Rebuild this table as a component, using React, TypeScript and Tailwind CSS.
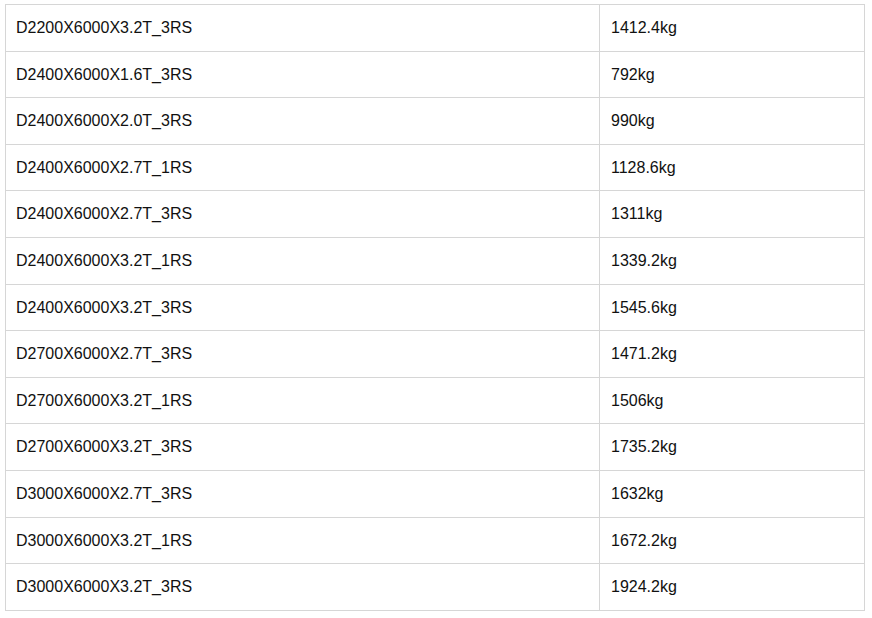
const rows: [string, string][] = [
  ["D2200X6000X3.2T_3RS", "1412.4kg"],
  ["D2400X6000X1.6T_3RS", "792kg"],
  ["D2400X6000X2.0T_3RS", "990kg"],
  ["D2400X6000X2.7T_1RS", "1128.6kg"],
  ["D2400X6000X2.7T_3RS", "1311kg"],
  ["D2400X6000X3.2T_1RS", "1339.2kg"],
  ["D2400X6000X3.2T_3RS", "1545.6kg"],
  ["D2700X6000X2.7T_3RS", "1471.2kg"],
  ["D2700X6000X3.2T_1RS", "1506kg"],
  ["D2700X6000X3.2T_3RS", "1735.2kg"],
  ["D3000X6000X2.7T_3RS", "1632kg"],
  ["D3000X6000X3.2T_1RS", "1672.2kg"],
  ["D3000X6000X3.2T_3RS", "1924.2kg"],
]

export default function App() {
  return (
    <div className="w-[872px] h-[618px] overflow-hidden bg-white pt-[4px] pl-[5px] font-['Liberation_Sans',Arial,sans-serif] text-[16px] text-[#111]">
      <table className="w-[860px] border-collapse table-fixed">
        <colgroup>
          <col className="w-[594px]" />
          <col />
        </colgroup>
        <tbody>
          {rows.map(([name, weight]) => (
            <tr key={name}>
              <td className="border border-[#d6d6d6] px-[10px] py-[10px] leading-[25.6px]">{name}</td>
              <td className="border border-[#d6d6d6] px-[11px] py-[10px] leading-[25.6px]">{weight}</td>
            </tr>
          ))}
        </tbody>
      </table>
    </div>
  )
}
